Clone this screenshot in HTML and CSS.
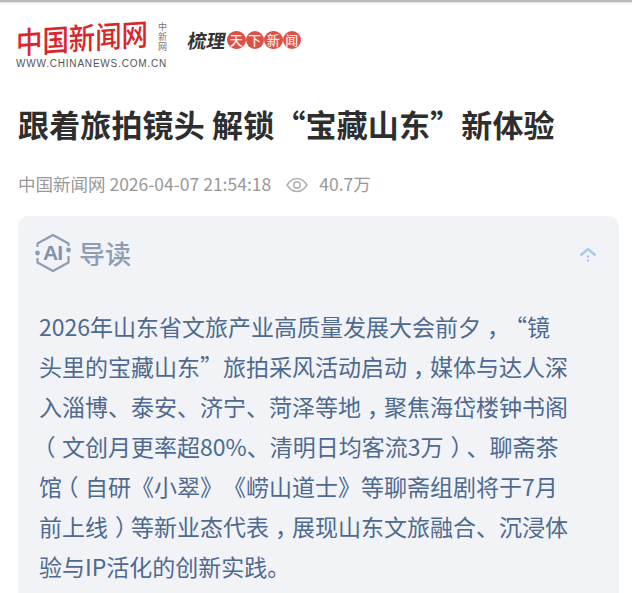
FILE: index.html
```html
<!DOCTYPE html>
<html lang="zh-CN">

<head>
    <meta charset="UTF-8">
    <meta name="viewport" content="width=device-width, initial-scale=1.0">
    <title>跟着旅拍镜头 解锁“宝藏山东”新体验</title>
    <link rel="stylesheet" href="styles.css">
</head>

<body>
    <header class="top-bar">
        <div class="logo">
            <div class="logo-main">
                <div class="logo-name">
                    <span class="logo-big">中国新闻网</span>
                    <span class="logo-small">中新网</span>
                </div>
                <div class="logo-url">WWW.CHINANEWS.COM.CN</div>
            </div>
            <div class="slogan">
                <span class="slogan-text">梳理</span>
                <span class="slogan-dot">天</span>
                <span class="slogan-dot">下</span>
                <span class="slogan-dot">新</span>
                <span class="slogan-dot">闻</span>
            </div>
        </div>
    </header>

    <main class="article">
        <h1>跟着旅拍镜头 解锁“宝藏山东”新体验</h1>
        <div class="meta">
            <span>中国新闻网 2026-04-07 21:54:18</span>
            <svg class="eye" viewBox="0 0 22 16" width="22" height="16">
                <path d="M1 8C4 3.5 7.5 1.5 11 1.5S18 3.5 21 8C18 12.5 14.500 14.500 11 14.500S4 12.500 1 8Z" fill="none" stroke="#b0b0b0" stroke-width="1.500" />
                <circle cx="11" cy="8" r="3.200" fill="none" stroke="#b0b0b0" stroke-width="1.500" />
            </svg>
            <span>40.7万</span>
        </div>

        <section class="guide">
            <div class="guide-head">
                <div class="guide-title">
                    <svg class="ai-icon" viewBox="0 0 38 40" width="38" height="40">
                        <path d="M3.500 14V10.500L19 2L34.500 10.500V13M3.500 25V29.500L19 38L34.500 29.500V23" fill="none" stroke="#8e9db3" stroke-width="2.200" stroke-linejoin="round" />
                        <circle cx="3.500" cy="20" r="2.400" fill="#8e9db3" />
                        <circle cx="34.500" cy="17" r="2.400" fill="#8e9db3" />
                        <text x="18.500" y="27" text-anchor="middle" class="ai-text">AI</text>
                    </svg>
                    <span>导读</span>
                </div>
                <svg class="fold" viewBox="0 0 18 16" width="18" height="16">
                    <path d="M1.500 8.500L9 2L16.500 8.500" fill="none" stroke="#a9c8ec" stroke-width="2.400" />
                    <circle cx="9" cy="9.500" r="1.200" fill="#a9c8ec" />
                    <circle cx="9" cy="13.500" r="1.200" fill="#a9c8ec" />
                </svg>
            </div>
            <p class="guide-text">
                <span class="line">2026年山东省文旅产业高质量发展大会前夕<span class="comma">，</span>“镜</span>
                <span class="line">头里的宝藏山东”旅拍采风活动启动<span class="comma">，</span>媒体与达人深</span>
                <span class="line">入淄博、泰安、济宁、菏泽等地<span class="comma">，</span>聚焦海岱楼钟书阁</span>
                <span class="line"><span class="open">（</span>文创月更率超80%、清明日均客流3万<span class="close">）</span>、聊斋茶</span>
                <span class="line">馆<span class="open">（</span>自研《小翠》《崂山道士》等聊斋组剧将于7月</span>
                <span class="line">前上线<span class="close">）</span>等新业态代表<span class="comma">，</span>展现山东文旅融合、沉浸体</span>
                <span class="line">验与IP活化的创新实践。</span>
            </p>
        </section>
    </main>
</body>

</html>
```

FILE: styles.css
```css
* {
    box-sizing: border-box;
}

body {
    margin: 0;
    background-color: #fff;
    font-family: "Noto Sans CJK SC", "Liberation Sans", sans-serif;
    color: #222;
    text-spacing-trim: space-all;
}

.top-bar {
    height: 92px;
    padding: 19px 16px 0;
    border-top: 2px solid #b9b9b9;
    box-shadow: inset 0 2px 2px -1px #ddd;
}

.logo {
    display: flex;
    align-items: flex-start;
    gap: 21px;
}

.logo-name {
    display: flex;
    align-items: center;
    gap: 8px;
    height: 32px;
}

.logo-big {
    display: block;
    width: 133px;
    font-size: 26.400px;
    font-weight: 500;
    line-height: 32px;
    white-space: nowrap;
    color: #d9262c;
    transform: skewY(-4deg) scaleY(1.15);
}

.logo-small {
    writing-mode: vertical-rl;
    font-size: 9px;
    line-height: 10px;
    letter-spacing: 1px;
    color: #777;
}

.logo-url {
    margin-top: 5px;
    font-family: "Liberation Sans", sans-serif;
    font-size: 10px;
    line-height: 12px;
    letter-spacing: 0.800px;
    color: #555;
}

.slogan {
    display: flex;
    align-items: center;
    gap: 0;
    margin-top: 8px;
}

.slogan-text {
    margin-right: 1px;
    font-size: 19px;
    font-weight: 700;
    line-height: 22px;
    color: #333;
    transform: skewX(-10deg);
}

.slogan-dot {
    width: 18.500px;
    height: 18.500px;
    border-radius: 50%;
    background-color: #dd5046;
    font-size: 13px;
    font-weight: 500;
    line-height: 18px;
    text-align: center;
    color: #fbe9e4;
}

.article {
    padding: 0 13px 0 18px;
}

h1 {
    margin: 9px 0 0;
    font-size: 31px;
    font-weight: 700;
    line-height: 46px;
    letter-spacing: 0.150px;
    color: #2e2e2e;
}

.meta {
    display: flex;
    align-items: center;
    margin-top: 24px;
    font-size: 17.500px;
    line-height: 26px;
    color: #999;
}

.eye {
    margin: 2px 11px 0 15px;
}

.guide {
    margin-top: 19px;
    padding: 17px 21px 7px;
    border-radius: 10px 10px 0 0;
    background-color: #f1f3f6;
}

.guide-head {
    display: flex;
    align-items: center;
    justify-content: space-between;
    padding-right: 1px;
}

.guide-title {
    display: flex;
    align-items: center;
    gap: 7px;
    margin-left: -5px;
    font-size: 26px;
    font-weight: 500;
    line-height: 40px;
    color: #8e9db3;
}

.ai-text {
    font-family: "Liberation Sans", sans-serif;
    font-size: 21px;
    font-weight: 700;
    letter-spacing: -1px;
    fill: #8292aa;
}

.fold {
    margin-top: 4px;
}

.guide-text {
    margin: 33px 0 0;
    font-size: 23px;
    line-height: 40px;
    color: #4e6a90;
}

.line {
    display: block;
    white-space: nowrap;
}

/* the screenshot's font sets these nearer the middle of their box */
.comma, .open, .close {
    display: inline-block;
    width: 23px;
    font-feature-settings: "halt";
}

.comma {
    padding-left: 6px;
}

.open {
    padding-left: 5px;
}

.close {
    padding-left: 7px;
}
```
